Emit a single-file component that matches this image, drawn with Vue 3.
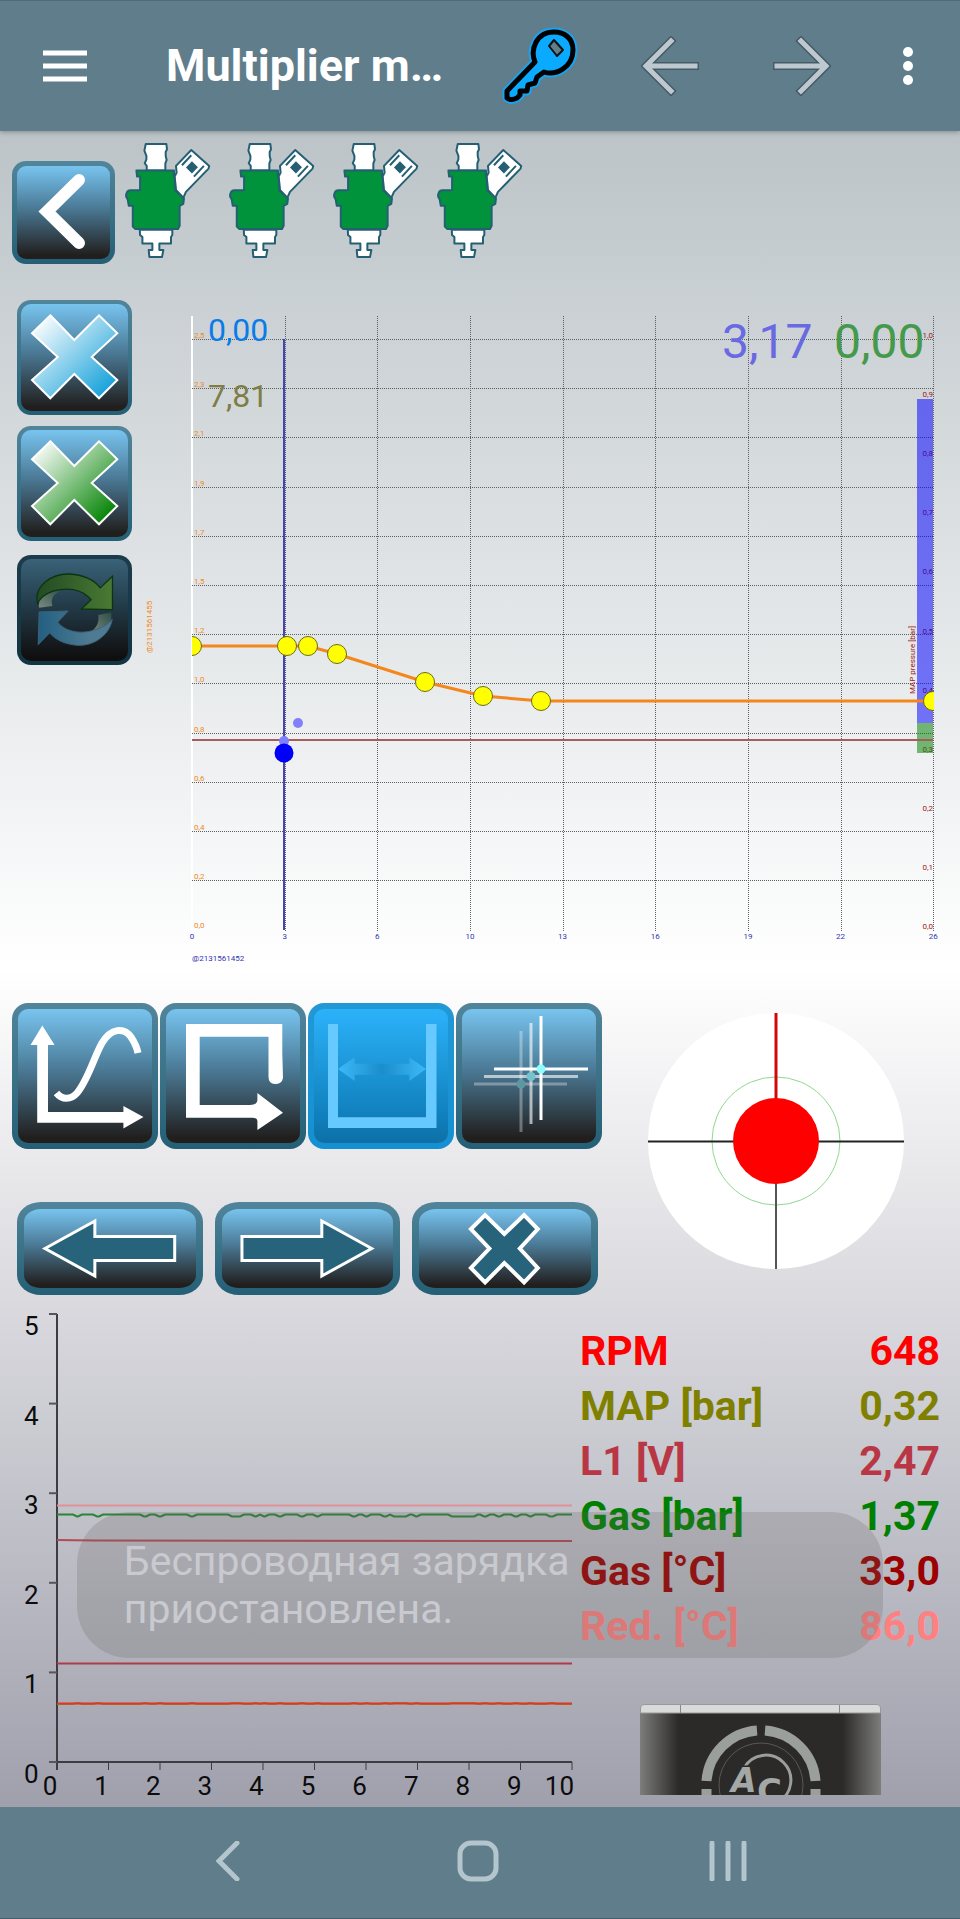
<script setup>
import { ref } from "vue"

const injectors = ["1", "2", "3", "4"]
const activeTool = ref("range")

// multiplier chart
const left = 192
const stepX = 92.65
const stepY = 49.2
const xLabels = ["0", "3", "6", "10", "13", "16", "19", "22", "26"]
const yLabels = ["2,5", "2,3", "2,1", "1,9", "1,7", "1,5", "1,2", "1,0", "0,8", "0,6", "0,4", "0,2", "0,0"]
const mapLabels = ["1,0", "0,9", "0,8", "0,7", "0,6", "0,5", "0,4", "0,3", "0,2", "0,1", "0,0"]
const points = [
  [192, 646], [287, 646], [308, 646], [337, 654], [425, 682], [483, 696], [541, 701], [933, 701],
]
const curve = points.map((p) => p.join(",")).join(" ")

// oscilloscope
const scopeY = [5, 4, 3, 2, 1, 0]
const scopeX = [0, 1, 2, 3, 4, 5, 6, 7, 8, 9]
const dips = [
  [77, 78], [97, 99], [144, 146], [159, 161], [191, 193], [232, 240], [255, 256], [264, 265],
  [279, 281], [301, 303], [317, 318], [353, 355], [366, 367], [384, 386], [394, 406], [416, 417],
  [452, 474], [484, 486], [498, 500], [515, 517], [530, 531], [550, 553],
]
const wave = (y, d) =>
  `M57 ${y}` + dips.map(([a, b]) => `L${a - 4} ${y}L${a} ${y + d}H${b}L${b + 4} ${y}`).join("") + "H572"

const readings = [
  { name: "RPM", value: "648", color: "#ff0000" },
  { name: "MAP [bar]", value: "0,32", color: "#808000" },
  { name: "L1 [V]", value: "2,47", color: "#b93744" },
  { name: "Gas [bar]", value: "1,37", color: "#008000" },
  { name: "Gas [°C]", value: "33,0", color: "#9c0000" },
  { name: "Red. [°C]", value: "86,0", color: "#ff8080" },
]

const cross = "33.3,15.3 57.3,40 82,15.3 100.3,33.3 74.7,57 100.3,80 82,98.3 57.3,74 33.3,98.3 15,80 40.7,57 15,33.3"
const keyShape = "M536 62L508 91V98Q512 101 518 98L521 95V91L528 91L529 85L536 83L538 77L545 72C557 76 574 67 574 50C574 38 565 32 555 32C537 32 531 50 536 62Z"
</script>

<template>
  <div class="app">
    <header class="topbar">
      <button class="bare menu" aria-label="Menu">
        <svg width="44" height="32" viewBox="0 0 44 32"><path d="M0 3H44M0 16H44M0 29H44" stroke="#fff" stroke-width="5" /></svg>
      </button>
      <h1>Multiplier m…</h1>
      <button class="bare action" aria-label="Key">
        <svg width="80" height="82" viewBox="502 25 80 82" stroke-linejoin="round">
          <path :d="keyShape" fill="#0aaaff" stroke="#18a4ee" stroke-width="9" />
          <path :d="keyShape" fill="#0aaaff" stroke="#000" stroke-width="5" />
          <path d="M550 46L555 40L564 50L558 56Z" fill="#5f7d8b" stroke="#111" stroke-width="2" />
        </svg>
      </button>
      <button class="bare action" aria-label="Previous">
        <svg width="60" height="60" viewBox="0 0 60 60" fill="none" stroke-linecap="square">
          <path d="M30 5L5 30L30 55M7 30H54" stroke="#455b66" stroke-width="8" />
          <path d="M30 5L5 30L30 55M7 30H54" stroke="#bdc9cf" stroke-width="5" />
        </svg>
      </button>
      <button class="bare action" aria-label="Next">
        <svg width="60" height="60" viewBox="0 0 60 60" fill="none" stroke-linecap="square">
          <path d="M30 5L55 30L30 55M53 30H6" stroke="#455b66" stroke-width="8" />
          <path d="M30 5L55 30L30 55M53 30H6" stroke="#bdc9cf" stroke-width="5" />
        </svg>
      </button>
      <button class="bare more" aria-label="More">
        <svg width="10" height="40" viewBox="0 0 10 40" fill="#fff"><circle cx="5" cy="6" r="5" /><circle cx="5" cy="20" r="5" /><circle cx="5" cy="34" r="5" /></svg>
      </button>
    </header>

    <main>
      <section class="injectors">
        <button class="tile back" aria-label="Back">
          <svg viewBox="5 5 93 93"><path d="M67 19L35 50.5L67 82" fill="none" stroke="#fff" stroke-width="12" stroke-linecap="round" /></svg>
        </button>
        <svg v-for="i in injectors" :key="i" class="injector" viewBox="372 36 264 352" stroke="#245f74" stroke-width="6" stroke-linejoin="round" fill="#fff">
          <path d="M437 42H499L501 58L497 66V78L500 90L496 100V122H440V108L434 100L439 88V78L433 62Z" />
          <path d="M574 60L628 108L626 116L558 186L550 204L528 180L524 140L530 128L528 108Z" />
          <path d="M546 106L574 76M582 140L612 108" fill="none" />
          <path d="M576 94L594 112L576 131L558 113Z" fill="#245f74" stroke="none" />
          <path d="M409 122H522V140L525 150L526 182L546 200L552 206L550 222L539 228V288L534 298H406L398 290V228H386L383 210L378 200Q378 182 390 181H420V140H411Z" fill="#00933b" />
          <path d="M419 300H517V316L513 322V341H478V361H490L486 382H448L446 361H457V341H427V322L420 316Z" />
        </svg>
      </section>

      <section class="map">
        <div class="side">
          <button class="tile" aria-label="Clear petrol points">
            <svg viewBox="4 4 107 107">
              <linearGradient id="crossBlue" x1="0" y1="0" x2="1" y2="1"><stop offset=".1" stop-color="#f4fafd" /><stop offset=".9" stop-color="#18a2da" /></linearGradient>
              <polygon :points="cross" fill="url(#crossBlue)" stroke="#fff" stroke-width="2" />
            </svg>
          </button>
          <button class="tile" aria-label="Clear gas points">
            <svg viewBox="4 4 107 107">
              <linearGradient id="crossGreen" x1="0" y1="0" x2="1" y2="1"><stop offset=".1" stop-color="#f2f8f2" /><stop offset=".9" stop-color="#068506" /></linearGradient>
              <polygon :points="cross" fill="url(#crossGreen)" stroke="#fff" stroke-width="2" />
            </svg>
          </button>
          <button class="tile dim" aria-label="Refresh" disabled>
            <svg viewBox="63 838 324 306">
              <linearGradient id="turnGreen"><stop offset="0" stop-color="#234a24" /><stop offset="1" stop-color="#4a7a33" /></linearGradient>
              <linearGradient id="turnBlue"><stop offset="0" stop-color="#235f82" /><stop offset=".7" stop-color="#4f7b92" /></linearGradient>
              <linearGradient id="turnTail" x1="0" y1="1" x2="1" y2="0"><stop offset="0" stop-color="#7b8b80" /><stop offset="1" stop-color="#2b4b45" /></linearGradient>
              <path d="M118 984C112 952 130 924 190 928L165 944Q152 958 158 979Z" fill="url(#turnTail)" />
              <path d="M114 975C98 915 160 880 210 882C250 884 285 900 303 924L340 889V990L246 988L275 960C245 925 200 922 160 934C128 945 116 960 114 975Z" fill="url(#turnGreen)" stroke="#0b3510" stroke-width="4" />
              <path d="M297 1006L336 998C342 1030 320 1052 272 1058C292 1046 300 1030 297 1006Z" fill="url(#turnTail)" />
              <path d="M118 997L206 994L174 1028C200 1060 250 1065 290 1050C325 1038 335 1025 339 1018C335 1060 290 1100 235 1098C195 1095 165 1080 150 1060L115 1096Z" fill="url(#turnBlue)" stroke="#3d6276" stroke-width="3" />
            </svg>
          </button>
        </div>

        <svg class="chart" viewBox="140 290 820 690" font-size="8">
          <clipPath id="plot"><rect x="192" y="316" width="742" height="620" /></clipPath>
          <path d="M192 316V930" stroke="#fff" stroke-width="2" />
          <g stroke="#5c6063" stroke-dasharray="1 1">
            <path v-for="i in 12" :key="'h' + i" :d="`M192 ${Math.round(339 + (i - 1) * stepY) + 0.5}H933`" />
            <path v-for="i in 8" :key="'v' + i" :d="`M${Math.round(left + i * stepX) + 0.5} 316V932`" />
          </g>
          <g fill="#f08a24">
            <text v-for="(t, i) in yLabels" :key="t" x="194" :y="338 + i * stepY">{{ t }}</text>
            <text transform="translate(152 653) rotate(-90)">@2131561455</text>
          </g>
          <g fill="#a01818">
            <text v-for="(t, i) in mapLabels" :key="t" x="933" :y="338 + i * 59.1" text-anchor="end">{{ t }}</text>
            <text transform="translate(915 694) rotate(-90)">MAP pressure [bar]</text>
          </g>
          <g fill="#3434b4">
            <text v-for="(t, i) in xLabels" :key="t" :x="left + i * stepX" y="939" text-anchor="middle">{{ t }}</text>
            <text x="192" y="961">@2131561452</text>
          </g>
          <rect x="917" y="399" width="16" height="324" fill="#0000ff" opacity=".52" />
          <rect x="917" y="723" width="16" height="30" fill="#008000" opacity=".52" />
          <path d="M192 740H933" stroke="#a85c5c" stroke-width="2" />
          <path d="M284 339V930" stroke="#4646b2" stroke-width="2" />
          <g fill="#8080fa"><circle cx="298" cy="723" r="5" /><circle cx="284" cy="741" r="5" /></g>
          <circle cx="284" cy="753" r="9.5" fill="#0000fa" />
          <g clip-path="url(#plot)">
            <polyline :points="curve" fill="none" stroke="#f5861c" stroke-width="3" />
            <circle v-for="p in points" :key="p[0]" :cx="p[0]" :cy="p[1]" r="9.5" fill="#ff0" stroke="#6b6b1c" />
          </g>
          <text x="208" y="341" font-size="32" fill="#0a7ce8">0,00</text>
          <text x="208" y="407" font-size="32" fill="#7d7d45">7,81</text>
          <text x="722" y="358" font-size="48" fill="#6969e2">3,17</text>
          <text x="834" y="358" font-size="48" fill="#45994a">0,00</text>
        </svg>
      </section>

      <section class="controls">
        <div>
          <div class="tools">
            <button class="tile" :class="{ active: activeTool === 'curve' }" aria-label="Curve" @click="activeTool = 'curve'">
              <svg viewBox="6 6 134 134">
                <path d="M30.3 22.5L42.6 42H36V109H111.4V103L131.5 114L111.4 125.5V119.7H25.2V42H18.5Z" fill="#fff" />
                <path d="M44.5 90C50 97 59 97 65 90C76 77 82 54 90 40C99 25 112 24 119 34C123 40 125 45 126 50" fill="none" stroke="#fff" stroke-width="7" />
              </svg>
            </button>
            <button class="tile" :class="{ active: activeTool === 'loop' }" aria-label="Loop" @click="activeTool = 'loop'">
              <svg viewBox="6 6 134 134">
                <path d="M26 21H122.3V50L123 75Q122 81 115 81Q108 81 108.5 72V33.7H39.7V102H90Q97 102 97.4 97V90L123 109.7L97.4 127V118Q97 114.7 92 114.7H26Z" fill="#fff" />
              </svg>
            </button>
            <button class="tile" :class="{ active: activeTool === 'range' }" aria-label="Range" @click="activeTool = 'range'">
              <svg viewBox="6 6 134 134">
                <linearGradient id="fade"><stop offset="0" stop-color="#3db9f8" /><stop offset=".5" stop-color="#1b8dcb" /><stop offset="1" stop-color="#3db9f8" /></linearGradient>
                <path d="M20 21H30V114.3H118V21H128.5V125H20Z" fill="#66c9ff" />
                <path d="M30 66L46.7 54.3V60.7H101.3V54.3L118 66L101.3 78V71.7H46.7V78Z" fill="url(#fade)" />
              </svg>
            </button>
            <button class="tile" :class="{ active: activeTool === 'crosshair' }" aria-label="Crosshair" @click="activeTool = 'crosshair'">
              <svg viewBox="6 6 134 134">
                <g stroke="#fff" stroke-width="3">
                  <path d="M65 28V129M18 81H111" opacity=".33" />
                  <path d="M75 20V121M28 73.5H122" opacity=".62" />
                  <path d="M85 13V117M38 66H132" />
                </g>
                <circle cx="65" cy="81" r="4.5" fill="#5c97a3" />
                <circle cx="75" cy="73.5" r="4.5" fill="#74c3cd" />
                <circle cx="85" cy="66" r="4.5" fill="#8ffcff" />
              </svg>
            </button>
          </div>
          <div class="moves">
            <button class="tile wide" aria-label="Left">
              <svg viewBox="7 7 172 79"><path d="M28 46.5L78 19V34.5H158V58.5H78V74Z" fill="#27637a" stroke="#fff" stroke-width="3" /></svg>
            </button>
            <button class="tile wide" aria-label="Right">
              <svg viewBox="7 7 172 79"><path d="M157 46.5L107 19V34.5H27V58.5H107V74Z" fill="#27637a" stroke="#fff" stroke-width="3" /></svg>
            </button>
            <button class="tile wide" aria-label="Cancel">
              <svg viewBox="7 7 172 79"><path d="M73.2 13L92.5 32L112.3 13L126 27L108 46.5L126 66L112.3 80.5L92.5 61L73.2 80.5L59 66L77.5 46.5L59 27Z" fill="#27637a" stroke="#fff" stroke-width="4" /></svg>
            </button>
          </div>
        </div>
        <div class="target">
          <svg viewBox="0 0 256 256">
            <circle cx="128" cy="128" r="128" fill="#fff" />
            <circle cx="128" cy="128" r="64" fill="none" stroke="#90d890" />
            <path d="M0 128.5H256" stroke="#222" stroke-width="2" />
            <path d="M128 128V256" stroke="#555" stroke-width="2" />
            <path d="M128 0V128" stroke="#d00808" stroke-width="3" />
            <circle cx="128" cy="128" r="43" fill="#f00" />
          </svg>
        </div>
      </section>

      <section class="data">
        <svg class="scope" viewBox="0 1300 580 507" fill="none" font-size="26">
          <path d="M57 1314V1770M49 1762H572" stroke="#3c3c42" stroke-width="2" />
          <path v-for="v in scopeY" :key="'ty' + v" :d="`M49 ${1762 - v * 89.6}H57`" stroke="#55555c" stroke-width="2" />
          <path v-for="i in 10" :key="'tx' + i" :d="`M${57 + i * 51.5} 1762V1770`" stroke="#3c3c42" stroke-width="1" />
          <g fill="#0c0c0c">
            <text v-for="v in scopeY" :key="'y' + v" x="24" :y="1783 - v * 89.6">{{ v }}</text>
            <text v-for="v in scopeX" :key="'x' + v" :x="50 + v * 51.6" y="1795" text-anchor="middle">{{ v }}</text>
            <text x="574" y="1795" text-anchor="end">10</text>
          </g>
          <path d="M57 1505.5H572" stroke="#e09096" stroke-width="2" />
          <path :d="wave(1514.5, 2)" stroke="#2a8535" stroke-width="2" />
          <path d="M57 1540L95 1540.5L572 1541" stroke="#b54a55" stroke-width="2" />
          <path d="M57 1663.5H572" stroke="#b03a45" stroke-width="2" />
          <path :d="wave(1704, -1)" stroke="#b07818" stroke-width="2" />
          <path d="M57 1703.5H572" stroke="#d83a28" stroke-width="2" />
        </svg>
        <div class="info">
          <table>
            <tbody>
              <tr v-for="r in readings" :key="r.name" :style="{ color: r.color }">
                <th scope="row">{{ r.name }}</th>
                <td>{{ r.value }}</td>
              </tr>
            </tbody>
          </table>
          <svg class="ecu" viewBox="640 1704 241 91">
            <linearGradient id="body">
              <stop offset="0" stop-color="#7d7d7d" /><stop offset=".16" stop-color="#2b2a28" />
              <stop offset=".84" stop-color="#2b2a28" /><stop offset="1" stop-color="#7d7d7d" />
            </linearGradient>
            <rect x="640" y="1712" width="241" height="90" fill="url(#body)" />
            <path d="M640.5 1713V1708Q640.5 1704.5 644 1704.5H877Q880.5 1704.5 880.5 1708V1713Z" fill="#d8dbda" stroke="#999" />
            <path d="M680.5 1705V1713M839.5 1705V1713" stroke="#888" />
            <g fill="none" stroke="#9a9e9c">
              <path d="M706.5 1781A54.5 54.5 0 0 1 757 1730.5M765 1730.5A54.5 54.5 0 0 1 815.5 1781M706.5 1789V1800M815.5 1789V1800" stroke-width="10" />
              <circle cx="761" cy="1785" r="42" stroke="#55585a" />
              <path d="M744 1768A25 25 0 1 1 778 1802" stroke-width="3" />
            </g>
            <g class="logo" fill="#a3a8a6" stroke="#2b2a28" stroke-width="3">
              <text x="731" y="1792" font-size="33" font-style="italic">A</text>
              <text x="757" y="1803" font-size="34">C</text>
            </g>
          </svg>
        </div>
        <div class="toast" role="status">Беспроводная зарядка приостановлена.</div>
      </section>
    </main>

    <nav class="navbar">
      <button class="bare" aria-label="System back">
        <svg width="24" height="40" viewBox="0 0 24 40"><path d="M21 2L3 20L21 38" /></svg>
      </button>
      <button class="bare" aria-label="Home">
        <svg width="42" height="42" viewBox="0 0 42 42"><rect x="3" y="3" width="36" height="36" rx="11" /></svg>
      </button>
      <button class="bare" aria-label="Recent apps">
        <svg width="38" height="40" viewBox="0 0 38 40"><path d="M3 2V38M19 2V38M35 2V38" /></svg>
      </button>
    </nav>
  </div>
</template>

<style>
body {
  margin: 0;
}
</style>

<style scoped>
.app {
  display: flex;
  flex-direction: column;
  min-height: 100vh;
  font-family: Roboto, sans-serif;
}
button {
  font: inherit;
  cursor: pointer;
}
.bare {
  display: flex;
  align-items: center;
  justify-content: center;
  padding: 0;
  border: 0;
  background: none;
}
.topbar {
  position: relative;
  display: flex;
  align-items: center;
  box-sizing: border-box;
  height: 131px;
  padding: 0 10px 0 43px;
  border-top: 1px solid #4f6c7a;
  background: #607d8b;
  box-shadow: 0 1px 5px rgba(0, 0, 0, 0.3);
}
.topbar h1 {
  flex: 1;
  min-width: 0;
  margin: 0 0 0 79px;
  overflow: hidden;
  color: #fff;
  font-size: 45px;
  font-weight: 700;
  line-height: 60px;
  white-space: nowrap;
}
.action {
  width: 130px;
  height: 100px;
}
.more {
  width: 84px;
  height: 100px;
}
main {
  flex: 1;
  background: linear-gradient(#bcc4c8, #fff 50%, #a0a0ad);
}
.tile {
  display: block;
  box-sizing: border-box;
  padding: 0;
  border: 5px solid transparent;
  border-radius: 14px;
  background:
    linear-gradient(#78c4ef, #4b7a96 45%, #211f1e 96%) padding-box,
    linear-gradient(#51859b, #245f75) border-box;
}
.tile svg {
  display: block;
  width: 100%;
  height: 100%;
}
.injectors {
  display: flex;
  gap: 16px;
  box-sizing: border-box;
  height: 159px;
  padding: 11px 12px 0;
}
.back {
  width: 103px;
  height: 103px;
  margin: 19px -7px 0 0;
}
.injector {
  width: 88px;
  height: 117px;
}
.map {
  display: flex;
}
.side {
  display: flex;
  flex-direction: column;
  gap: 11px;
  box-sizing: border-box;
  width: 140px;
  padding: 10px 8px 0 17px;
}
.side .tile {
  width: 115px;
  height: 115px;
  border-width: 4px;
}
.side .dim {
  height: 110px;
  margin-top: 3px;
  background:
    linear-gradient(#3a6278, #233c4a 45%, #100f0f 96%) padding-box,
    linear-gradient(#1d3c4b, #123443) border-box;
}
.chart {
  flex: 1;
  min-width: 0;
}
.controls {
  display: grid;
  grid-template-columns: 620fr 340fr;
  box-sizing: border-box;
  min-height: 320px;
  padding-top: 23px;
}
.tools,
.moves {
  display: grid;
  grid-template-columns: repeat(4, minmax(0, 1fr));
  gap: 2px;
  padding: 0 18px 0 12px;
}
.tools .tile {
  aspect-ratio: 1;
  border-width: 6px;
  border-radius: 16px;
}
.tools .active {
  background:
    linear-gradient(#2cb2fa, #1080bc 80%, #0f6fa6) padding-box,
    linear-gradient(#2298d6, #1490d2) border-box;
}
.moves {
  grid-template-columns: repeat(3, minmax(0, 1fr));
  gap: 12px;
  padding: 53px 22px 0 17px;
}
.wide {
  height: 93px;
  border-width: 7px;
  border-radius: 24px / 20px;
}
.target {
  display: flex;
  align-items: flex-start;
  justify-content: center;
  padding: 10px 28px 0 0;
}
.target svg {
  width: 100%;
  max-width: 256px;
}
.data {
  position: relative;
  display: grid;
  grid-template-columns: 580fr 380fr;
}
.scope {
  display: block;
  width: 100%;
}
.info {
  padding: 24px 20px 0 0;
}
table {
  width: 100%;
  border-collapse: collapse;
  font-size: 41px;
  line-height: 55px;
}
th,
td {
  padding: 0;
  font-weight: 700;
  text-align: left;
}
td {
  text-align: right;
}
.ecu {
  display: block;
  width: 241px;
  margin: 50px 0 0 60px;
}
.logo {
  font-family: "DejaVu Sans", sans-serif;
  font-weight: 700;
  paint-order: stroke;
}
.toast {
  position: absolute;
  top: 212px;
  right: 8%;
  left: 8%;
  padding: 25px 47px;
  border-radius: 52px;
  background: rgba(96, 96, 90, 0.22);
  color: #c9cacf;
  font-size: 41px;
  line-height: 48px;
}
.navbar {
  display: grid;
  grid-template-columns: repeat(3, 1fr);
  box-sizing: border-box;
  height: 112px;
  padding: 0 107px 4px 103px;
  border-bottom: 1px solid #455d69;
  background: #607d8b;
}
.navbar svg {
  fill: none;
  stroke: #b3c5cd;
  stroke-width: 5;
  stroke-linecap: round;
}
</style>
